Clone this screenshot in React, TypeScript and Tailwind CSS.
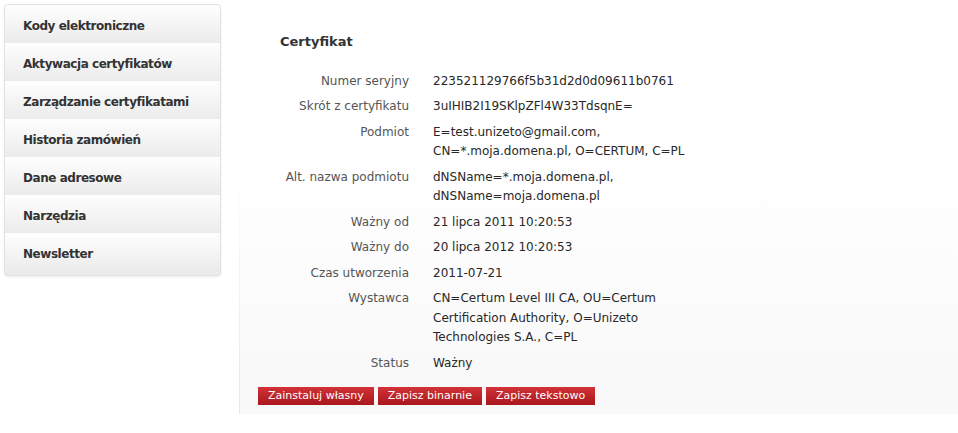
const menu = [
  'Kody elektroniczne',
  'Aktywacja certyfikatów',
  'Zarządzanie certyfikatami',
  'Historia zamówień',
  'Dane adresowe',
  'Narzędzia',
  'Newsletter',
];

type Row = { label: string; value: string[] };

const rows: Row[] = [
  { label: 'Numer seryjny', value: ['223521129766f5b31d2d0d09611b0761'] },
  { label: 'Skrót z certyfikatu', value: ['3uIHIB2I19SKlpZFl4W33TdsqnE='] },
  { label: 'Podmiot', value: ['E=test.unizeto@gmail.com,', 'CN=*.moja.domena.pl, O=CERTUM, C=PL'] },
  { label: 'Alt. nazwa podmiotu', value: ['dNSName=*.moja.domena.pl,', 'dNSName=moja.domena.pl'] },
  { label: 'Ważny od', value: ['21 lipca 2011 10:20:53'] },
  { label: 'Ważny do', value: ['20 lipca 2012 10:20:53'] },
  { label: 'Czas utworzenia', value: ['2011-07-21'] },
  {
    label: 'Wystawca',
    value: ['CN=Certum Level III CA, OU=Certum', 'Certification Authority, O=Unizeto', 'Technologies S.A., C=PL'],
  },
  { label: 'Status', value: ['Ważny'] },
];

const buttons = ['Zainstaluj własny', 'Zapisz binarnie', 'Zapisz tekstowo'];

function Sidebar() {
  return (
    <nav className="mt-1 ml-1 w-[217px] shrink-0 self-start overflow-hidden rounded-[4px] border border-[#e2e2e2] bg-[#ebebeb] pb-[4px] shadow-[0_1px_2px_rgba(0,0,0,0.08)]">
      {menu.map((item) => (
        <div
          key={item}
          className="flex h-[38px] items-center bg-gradient-to-b from-[#fefefe] to-[#ebebeb] pl-[18px] pt-[4px] text-[12px] font-bold tracking-[-0.45px] text-[#333]"
        >
          {item}
        </div>
      ))}
    </nav>
  );
}

function CertificateDetails() {
  return (
    <section className="ml-[18px] h-[414px] flex-1 self-start bg-gradient-to-b from-white from-40% to-[#e6e6e6] pl-px">
      <div className="h-full bg-gradient-to-b from-white from-40% to-[#f8f8f8] pl-[18px] pt-[32px]">
        <h2 className="pl-[22px] text-[13px] font-bold text-[#333]">Certyfikat</h2>
        <div className="mt-[17px] grid grid-cols-[151px_1fr] gap-x-[24px] text-[12px] leading-[19.5px]">
          {rows.map((row) => (
            <div key={row.label} className="contents">
              <div className="py-[3px] text-right text-[#555]">{row.label}</div>
              <div className="py-[3px] text-[#282828]">
                {row.value.map((line) => (
                  <div key={line}>{line}</div>
                ))}
              </div>
            </div>
          ))}
        </div>
        <div className="mt-[11px] flex gap-[4px]">
          {buttons.map((label) => (
            <button
              key={label}
              className="h-[18px] bg-gradient-to-b from-[#d23238] to-[#a8161c] px-[10px] text-[11px] leading-[18px] text-white"
            >
              {label}
            </button>
          ))}
        </div>
      </div>
    </section>
  );
}

export default function App() {
  return (
    <div className="flex h-[433px] w-[958px] bg-white font-['DejaVu_Sans',Verdana,sans-serif]">
      <Sidebar />
      <CertificateDetails />
    </div>
  );
}
